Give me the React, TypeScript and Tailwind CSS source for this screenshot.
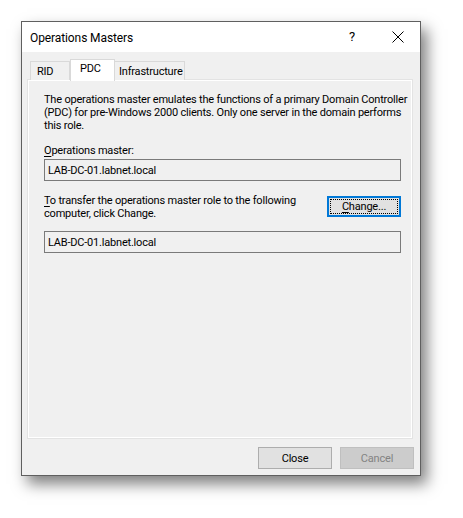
import React from "react";

const font = { fontFamily: 'Roboto, "Noto Sans", Arial, sans-serif' };

export default function App() {
  return (
    <div className="w-[463px] h-[518px] bg-white pt-[21px] pl-[21px]" style={font}>
      <div className="w-[400px] h-[455px] border border-[#5f5f5f] bg-[#f0f0f0] flex flex-col shadow-[6px_8px_14px_rgba(0,0,0,0.5)] text-[11px] tracking-[-0.2px] text-black whitespace-nowrap">
        {/* Title bar */}
        <div className="h-[30px] bg-white flex items-center pl-[8px] relative">
          <span className="text-[12px] tracking-[-0.1px] leading-none mt-[1px]">Operations Masters</span>
          <span className="absolute left-[327px] top-[8px] text-[13px] leading-none">?</span>
          <svg className="absolute left-[370px] top-[9px]" width="12" height="12" viewBox="0 0 12 12">
            <path d="M0.5 0.5 L11.5 11.5 M11.5 0.5 L0.5 11.5" stroke="#000" strokeWidth="1" fill="none" />
          </svg>
        </div>
        {/* Body */}
        <div className="flex-1 flex flex-col pl-[6px] pr-[8px] pt-[7px]">
          {/* Tabs */}
          <div className="flex items-end h-[21px] pl-[2px] relative z-10">
            <div className="h-[19px] w-[40px] border border-b-0 border-[#d9d9d9] bg-[#f0f0f0] flex items-center pl-[6px] leading-none">RID</div>
            <div className="h-[22px] w-[45px] border border-b-0 border-[#d9d9d9] bg-white flex items-start pt-[3px] pl-[9px] leading-none -mb-[1px]">PDC</div>
            <div className="h-[19px] w-[70px] border border-b-0 border-l-0 border-[#d9d9d9] bg-[#f0f0f0] flex items-center pl-[4px] leading-none">Infrastructure</div>
          </div>
          <div className="h-[358px] border border-white outline outline-1 outline-[#e3e3e3] bg-[#f0f0f0] pl-[15px] pr-[10px] pt-[12px]">
            <p className="leading-[13px]">
              The operations master emulates the functions of a primary Domain Controller<br />
              (PDC) for pre-Windows 2000 clients. Only one server in the domain performs<br />
              this role.
            </p>
            <div className="mt-[12px] leading-[13px]">
              <span className="underline underline-offset-2">O</span>perations master:
            </div>
            <div className="mt-[2px] w-[357px] h-[22px] border border-[#7a7a7a] flex items-center pl-[3px] leading-none">
              LAB-DC-01.labnet.local
            </div>
            <div className="mt-[14px] flex justify-between w-[357px]">
              <div className="leading-[13px] mt-[-1px]">
                <span className="underline underline-offset-2">T</span>o transfer the operations master role to the following<br />
                computer, click Change.
              </div>
              <div className="w-[74px] h-[21px] border-2 border-[#0078d7] bg-[#e1e1e1] p-[1px] mt-[1px]">
                <div className="w-full h-full border border-dotted border-black flex items-center justify-center leading-none">
                  <span><span className="underline underline-offset-2">C</span>hange...</span>
                </div>
              </div>
            </div>
            <div className="mt-[11px] w-[357px] h-[22px] border border-[#7a7a7a] flex items-center pl-[3px] leading-none">
              LAB-DC-01.labnet.local
            </div>
          </div>
          {/* Buttons */}
          <div className="flex justify-end gap-[8px] mt-[9px] -mr-[2px]">
            <div className="w-[74px] h-[22px] border border-[#adadad] bg-[#e1e1e1] flex items-center justify-center leading-none">Close</div>
            <div className="w-[74px] h-[22px] border border-[#bfbfbf] bg-[#cccccc] text-[#838383] flex items-center justify-center leading-none">Cancel</div>
          </div>
        </div>
      </div>
    </div>
  );
}
